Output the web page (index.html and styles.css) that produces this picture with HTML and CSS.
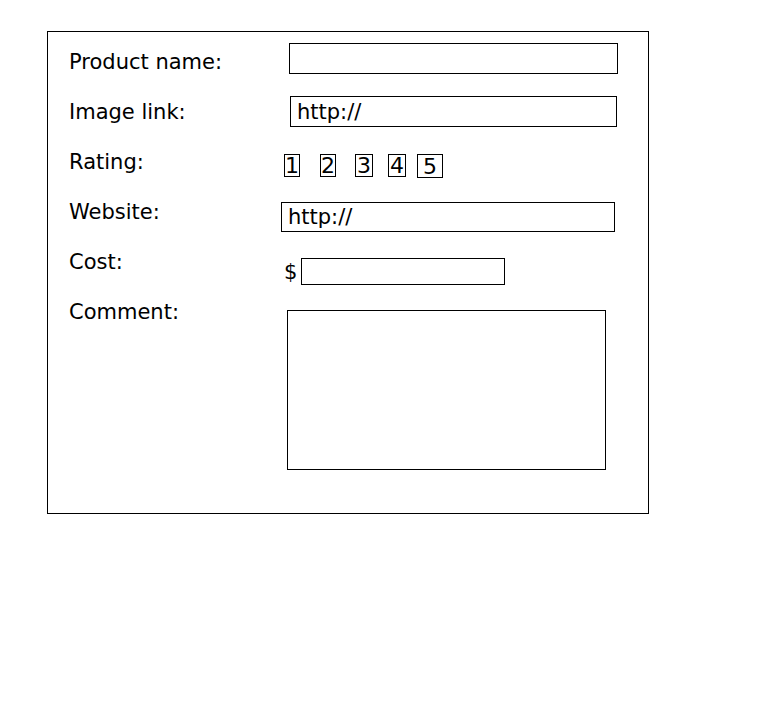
FILE: index.html
```html
<!DOCTYPE html>
<html lang="en">
<head>
  <meta charset="UTF-8" />
  <title>Add Product</title>
  <link rel="stylesheet" href="styles.css">
</head>
<body>

<form class="product-form">
  <div class="row">
    <label for="pname">Product name:</label>
    <input type="text" id="pname" class="field field-name">
  </div>
  <div class="row">
    <label for="pimage">Image link:</label>
    <input type="text" id="pimage" class="field field-image" value="http://">
  </div>
  <div class="row">
    <label>Rating:</label>
    <div class="rating">
      <span class="star">1</span>
      <span class="star">2</span>
      <span class="star star-3">3</span>
      <span class="star star-4">4</span>
      <span class="star star-5">5</span>
    </div>
  </div>
  <div class="row">
    <label for="psite">Website:</label>
    <input type="text" id="psite" class="field field-site" value="http://">
  </div>
  <div class="row">
    <label for="pcost">Cost:</label>
    <div class="cost">
      <span>$</span>
      <input type="text" id="pcost" class="field field-cost">
    </div>
  </div>
  <div class="row">
    <label for="pcomment">Comment:</label>
    <textarea id="pcomment" class="field field-comment"></textarea>
  </div>
</form>

</body>
</html>
```

FILE: styles.css
```css
body {
  margin: 8px;
  background: #fff;
  font-family: "DejaVu Sans", Verdana, sans-serif;
  color: #000;
}

.product-form {
  box-sizing: border-box;
  width: 602px;
  height: 483px;
  margin: 23px 0 0 39px;
  padding: 8px 0 0 21px;
  border: 1px solid #000;
  display: grid;
  grid-template-columns: 212px 1fr;
  grid-auto-rows: 50px;
}

.row {
  display: contents;
}

label {
  font-size: 21px;
  line-height: 24px;
  padding-top: 10px;
}

.field {
  box-sizing: border-box;
  font-family: inherit;
  font-size: 21px;
  color: #000;
  border: 1px solid #000;
  border-radius: 0;
  padding: 0 6px;
  outline: none;
  background: #fff;
}

.field-name {
  width: 329px;
  height: 31px;
  margin: 3px 0 0 8px;
}

.field-image {
  width: 327px;
  height: 31px;
  margin: 6px 0 0 9px;
}

.field-site {
  width: 334px;
  height: 30px;
  margin: 12px 0 0 0;
}

.rating {
  display: flex;
  align-items: flex-start;
  margin: 14px 0 0 3px;
}

.star {
  border: 1px solid #000;
  font-size: 22px;
  line-height: 21px;
  padding: 0;
  margin-left: 20px;
}

.star:first-child {
  margin-left: 0;
}

.star-3 {
  padding: 0 1px;
  margin-left: 19px;
}

.star-4 {
  padding: 0 1px;
  margin-left: 15px;
}

.star-5 {
  padding: 1px 5px 0;
  margin-left: 11px;
}

.cost {
  display: flex;
  align-items: center;
  gap: 4px;
  margin: 18px 0 0 3px;
  font-size: 21px;
  align-self: start;
}

.field-cost {
  width: 204px;
  height: 27px;
}

.field-comment {
  width: 319px;
  height: 160px;
  margin: 20px 0 0 6px;
  resize: none;
}
```
